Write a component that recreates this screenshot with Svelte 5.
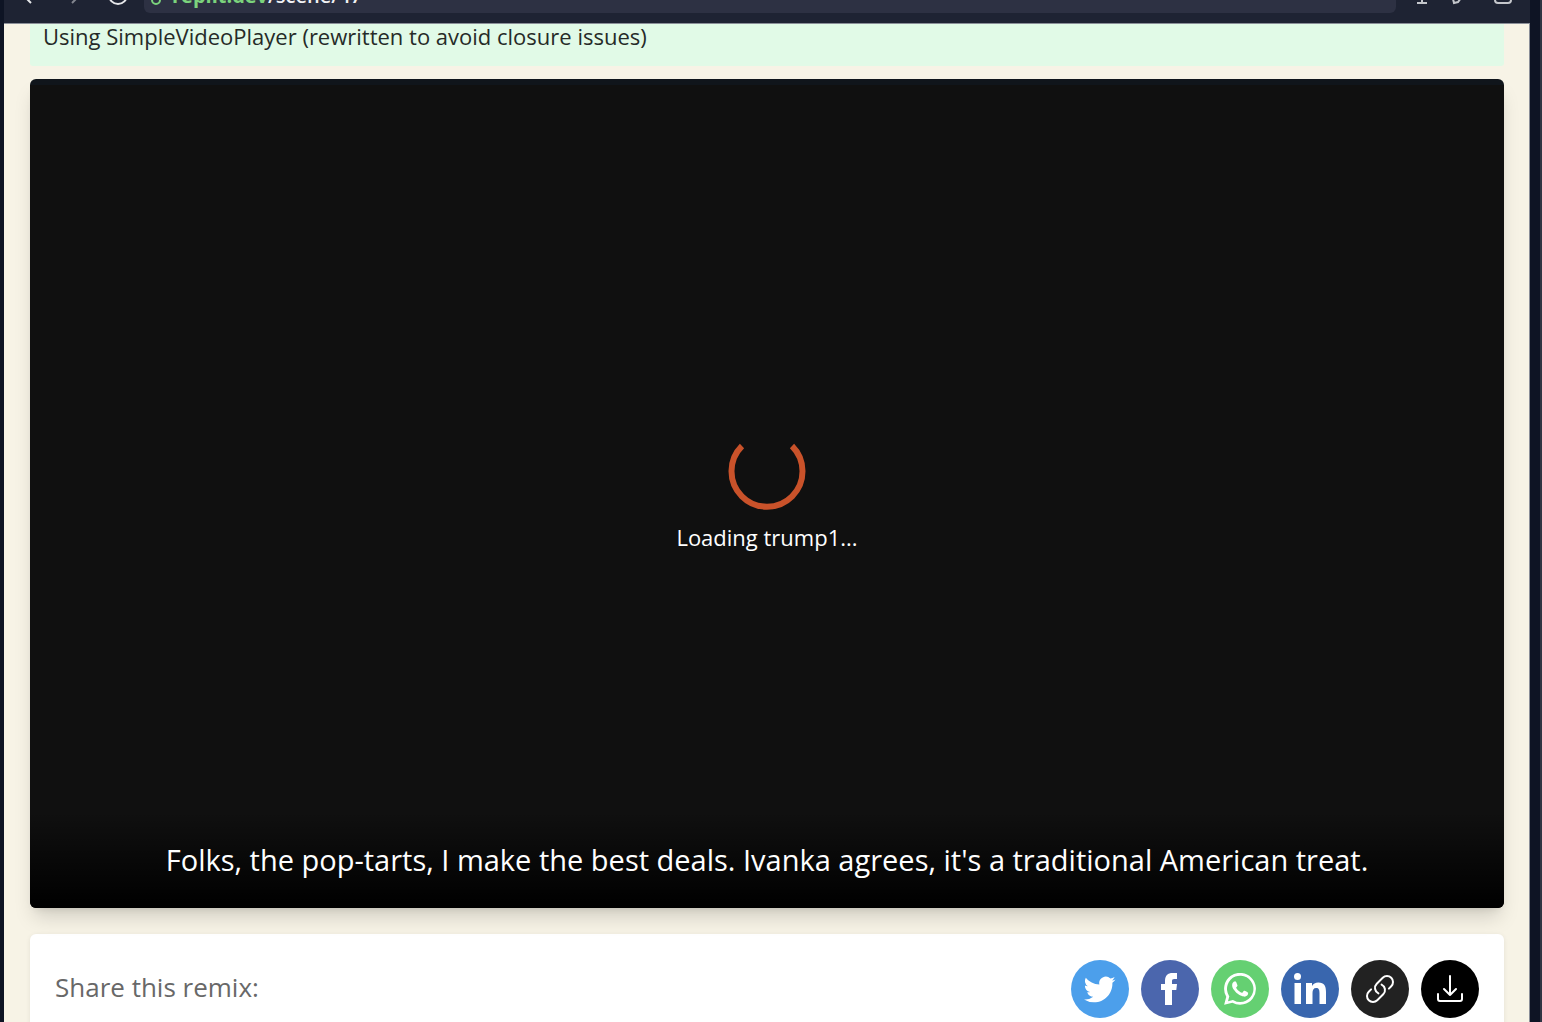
<script>
  const message = 'Loading trump1...';
  const caption = "Folks, the pop-tarts, I make the best deals. Ivanka agrees, it's a traditional American treat.";
</script>

<div class="window">
  <header class="bar">
    <div class="nav">
      <button aria-label="Back"><svg width="20" height="22" viewBox="0 0 20 22"><path d="M11 2 2 11l9 9" /></svg></button>
      <button class="fwd" aria-label="Forward"><svg width="20" height="22" viewBox="0 0 20 22"><path d="m8 2 9 9-9 9" /></svg></button>
      <button aria-label="Reload"><svg width="22" height="22" viewBox="0 0 22 22"><circle cx="10" cy="12" r="9" /></svg></button>
    </div>
    <a class="address" href="#top">
      <svg width="12" height="20" viewBox="0 0 12 20"><circle cx="6" cy="14" r="4" /><path d="M3 10V4a3 3 0 0 1 6 0" /></svg>
      <span><b>replit.dev</b>/scene/47</span>
    </a>
    <div class="tools">
      <button aria-label="Cursor"><svg width="20" height="24" viewBox="0 0 20 24"><path d="M10 2v20M5 22h10" /></svg></button>
      <button aria-label="Edit"><svg width="20" height="24" viewBox="0 0 20 24"><path d="m1 18 9-12 5 3-9 12-4 1z" /></svg></button>
      <button aria-label="Tabs"><svg width="20" height="24" viewBox="0 0 20 24"><rect x="3" y="4" width="16" height="18" rx="3" /></svg></button>
    </div>
  </header>

  <main>
    <p class="notice">Using SimpleVideoPlayer (rewritten to avoid closure issues)</p>

    <section class="player" aria-label="Video player">
      <div class="loading" role="status">
        <svg width="78" height="78" viewBox="0 0 78 78"><path d="M14 14A35.5 35.5 0 1 0 64 14" /></svg>
        <p>{message}</p>
      </div>
      <p class="caption">{caption}</p>
    </section>

    <section class="share">
      <h2>Share this remix:</h2>
      <div class="links">
        <button class="twitter" aria-label="Share on Twitter">
          <svg width="32" height="32" viewBox="0 0 24 24"><path d="M23.6 4.9c-.9.4-1.8.6-2.8.8 1-.6 1.8-1.600 2.100-2.700-.9.6-2 1-3.100 1.200A4.900 4.900 0 0 0 11.500 8.600C7.400 8.400 3.800 6.500 1.400 3.500A4.900 4.900 0 0 0 2.900 10c-.8 0-1.600-.2-2.200-.6v.1c0 2.400 1.700 4.300 3.900 4.800-.7.200-1.500.2-2.200.1a4.900 4.900 0 0 0 4.600 3.400A9.900 9.900 0 0 1-.2 19.800a13.900 13.900 0 0 0 7.500 2.200c9.100 0 14-7.500 14-14v-.6c.9-.7 1.700-1.500 2.300-2.500z" /></svg>
        </button>
        <button class="facebook" aria-label="Share on Facebook">
          <svg width="32" height="34" viewBox="0 0 32 34"><path d="M11 33V18H7v-6h4V9c0-5.400 2.700-8 7.700-8H23v6h-2.800c-1.700 0-2.200.8-2.200 2.400V12h5l-.7 6H18v15z" /></svg>
        </button>
        <button class="whatsapp" aria-label="Share on WhatsApp">
          <svg width="32" height="32" viewBox="0 0 24 24"><path d="M17.500 14.400c-.3-.2-1.800-.9-2-1s-.5-.1-.7.100-.8 1-.9 1.200-.3.200-.6.100-1.300-.5-2.400-1.500c-.9-.8-1.500-1.800-1.700-2.100s0-.5.100-.6l.5-.5.300-.5v-.5L9.200 6.900c-.2-.6-.5-.5-.7-.5h-.6c-.2 0-.5.1-.8.400s-1 1-1 2.500 1.100 2.900 1.200 3.100 2.100 3.200 5.100 4.500c3 1.200 3 .8 3.500.7.600 0 1.800-.7 2-1.400s.2-1.300.2-1.400-.300-.2-.6-.4M12.100 21.800a9.900 9.900 0 0 1-5-1.400l-.4-.2-3.700 1 1-3.700-.2-.3a9.900 9.900 0 1 1 8.300 4.600M20.500 3.500A11.900 11.900 0 0 0 1.700 17.800L.1 23.900l6.200-1.600A11.900 11.900 0 0 0 20.500 3.500" /></svg>
        </button>
        <button class="linkedin" aria-label="Share on LinkedIn">
          <svg width="34" height="34" viewBox="0 0 34 34"><circle cx="4.500" cy="4.500" r="3.500" /><path d="M1.500 11h6.500v21H1.500zM13 11h6v3c1.200-2.200 3.400-3.500 6.300-3.500 6.100 0 7.700 3.700 7.700 9.500v12h-6.500V21c0-3-.6-5-3.300-5s-3.700 2-3.700 5v11H13z" /></svg>
        </button>
        <button class="copy" aria-label="Copy link">
          <svg width="32" height="32" viewBox="0 0 24 24"><path d="M13.190 8.688a4.500 4.500 0 0 1 1.242 7.244l-4.500 4.500a4.500 4.500 0 0 1-6.364-6.364l1.757-1.757m13.350-.622 1.757-1.757a4.500 4.500 0 0 0-6.364-6.364l-4.500 4.500a4.500 4.500 0 0 0 1.242 7.244" /></svg>
        </button>
        <button class="download" aria-label="Download">
          <svg width="32" height="32" viewBox="0 0 32 32"><path d="M16 3v19m-6-6 6 6 6-6M4 21v5a2 2 0 0 0 2 2h20a2 2 0 0 0 2-2v-5" /></svg>
        </button>
      </div>
    </section>
  </main>
</div>

<style>
  :global(body) { margin: 0; background: #0e1424; }
  * { box-sizing: border-box; }
  .window {
    height: 100vh;
    overflow: hidden;
    display: flex;
    flex-direction: column;
    padding: 0 10px 0 4px;
    border-right: 2px solid #2f3543;
    font-family: "Open Sans", "Noto Sans", sans-serif;
    background: #0e1424;
  }
  button { padding: 0; border: 0; background: none; display: flex; cursor: pointer; }
  p, h2 { margin: 0; font-weight: 400; }
  .bar {
    height: 24px;
    flex: none;
    display: flex;
    align-items: flex-end;
    padding: 0 18px 10px 16px;
    background: #1e2333;
    border-bottom: 1px solid #8b8f99;
  }
  .bar svg { fill: none; stroke: #c4c6cb; stroke-width: 2; }
  .nav { width: 124px; display: flex; gap: 24px; margin-bottom: 8px; }
  .nav svg { stroke: #e6e7ea; }
  .fwd { opacity: 0.5; }
  .address {
    flex: 1;
    height: 40px;
    display: flex;
    align-items: flex-end;
    gap: 10px;
    padding: 0 6px 7px;
    border-radius: 6px;
    background: #2d3143;
    color: #f1f1f4;
    font-size: 20px;
    font-weight: 600;
    line-height: 20px;
    text-decoration: none;
  }
  .address svg { stroke: #7bd37c; }
  .address b { color: #7bd37c; font-weight: 700; }
  .tools { display: flex; gap: 20px; margin-left: 16px; margin-bottom: 8px; }

  main {
    flex: 1;
    min-height: 0;
    padding: 0 25px 0 26px;
    background: #f7f3e6;
    border-right: 1px solid #8b8f99;
  }
  .notice {
    padding: 0 13px 18px;
    border-radius: 0 0 3px 3px;
    background: #e1fae7;
    color: #262b28;
    font-size: 22px;
    line-height: 24px;
  }
  .player {
    position: relative;
    display: flex;
    align-items: center;
    justify-content: center;
    aspect-ratio: 16 / 9;
    margin-top: 13px;
    border-radius: 6px;
    overflow: hidden;
    background: linear-gradient(#10151b 6px, #101010 6px);
    color: #fff;
    box-shadow: 0 13px 20px -4px rgb(0 0 0 / 15%), 0 5px 8px -5px rgb(0 0 0 / 12%);
  }
  .loading { display: flex; flex-direction: column; align-items: center; gap: 12px; padding-bottom: 4px; }
  .loading svg { fill: none; stroke: #c9522a; stroke-width: 6; }
  .loading p { font-size: 22px; line-height: 30px; }
  .caption {
    position: absolute;
    inset: auto 0 0;
    padding: 27px;
    text-align: center;
    font-size: 29px;
    line-height: 42px;
    background: linear-gradient(to top, #000, transparent);
  }
  .share {
    display: flex;
    align-items: center;
    justify-content: space-between;
    gap: 24px;
    margin-top: 26px;
    padding: 26px 25px;
    border-radius: 6px;
    background: #fff;
    box-shadow: 0 1px 5px rgb(0 0 0 / 8%);
  }
  h2 { color: #686868; font-size: 26px; line-height: 36px; padding-bottom: 4px; }
  .links { display: flex; gap: 12px; }
  .links button {
    width: 58px;
    height: 58px;
    border-radius: 50%;
    align-items: center;
    justify-content: center;
  }
  .links svg { fill: #fff; }
  .twitter { background: #4c9feb; }
  .facebook { background: #4b66ad; }
  .whatsapp { background: #65d072; }
  .linkedin { background: #3966ae; }
  .copy { background: #222; }
  .download { background: #000; }
  .copy svg, .download svg {
    fill: none;
    stroke: #fff;
    stroke-width: 2;
    stroke-linecap: round;
    stroke-linejoin: round;
  }
  .copy svg { stroke-width: 1.500; }
</style>
